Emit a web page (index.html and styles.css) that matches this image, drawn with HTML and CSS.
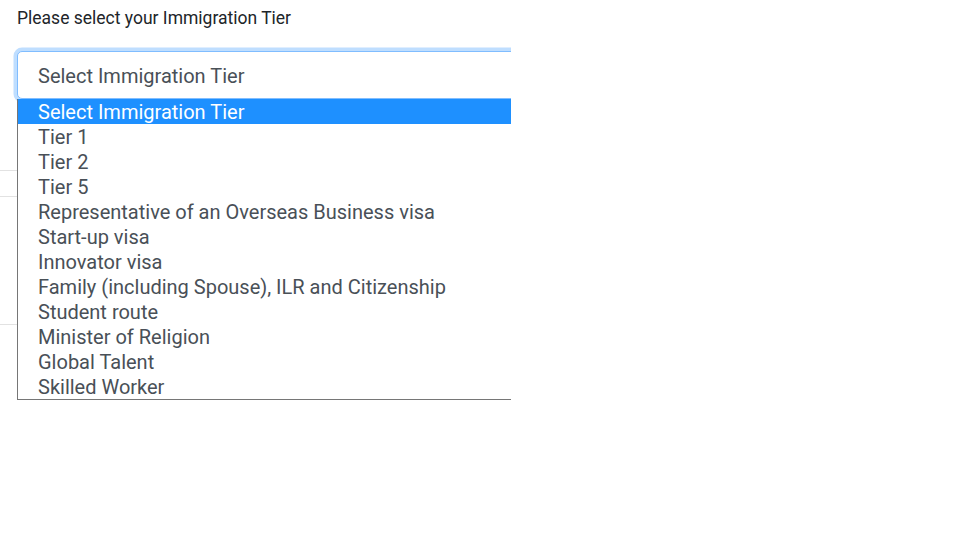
FILE: index.html
```html
<!DOCTYPE html>
<html>
<head>
<meta charset="utf-8">
<link rel="stylesheet" href="styles.css">
</head>
<body>
<div class="clip">
  <div class="form-group">
    <label class="label">Please select your Immigration Tier</label>
    <div class="select-wrap">
      <div class="select">Select Immigration Tier</div>
      <div class="behind">
        <div class="row r1"></div>
        <div class="row r2"></div>
        <div class="row r3"></div>
      </div>
      <ul class="list">
        <li class="opt active">Select Immigration Tier</li>
        <li class="opt">Tier 1</li>
        <li class="opt">Tier 2</li>
        <li class="opt">Tier 5</li>
        <li class="opt">Representative of an Overseas Business visa</li>
        <li class="opt">Start-up visa</li>
        <li class="opt">Innovator visa</li>
        <li class="opt">Family (including Spouse), ILR and Citizenship</li>
        <li class="opt">Student route</li>
        <li class="opt">Minister of Religion</li>
        <li class="opt">Global Talent</li>
        <li class="opt">Skilled Worker</li>
      </ul>
    </div>
  </div>
</div>
</body>
</html>
```
FILE: styles.css
```css
* { box-sizing: border-box; }
html, body { margin: 0; padding: 0; background: #fff; }
body { font-family: Roboto, "Liberation Sans", sans-serif; color: #212529; }
.clip { width: 511px; height: 540px; overflow: hidden; }
.form-group { padding: 6px 0 0 17px; }
.label { display: block; font-size: 17.5px; line-height: 24px; margin-bottom: 21px; }
.select-wrap { position: relative; width: 560px; }
.select {
  height: 48px;
  border: 1px solid #80bdff;
  border-radius: 5px;
  box-shadow: 0 0 0 3.5px rgba(0, 123, 255, 0.25);
  padding: 1px 0 0 20px;
  font-size: 20px;
  line-height: 46px;
  color: #495057;
  background: #fff;
}
.behind { margin-left: -17px; }
.row { height: 1px; background: #e2e2e2; }
.r1 { margin-top: 71px; }
.r2 { margin-top: 25px; }
.r3 { margin-top: 127px; }
.list {
  position: absolute;
  left: 0;
  top: 48px;
  width: 560px;
  margin: 0;
  padding: 0;
  list-style: none;
  border: 1px solid #767676;
  border-top: 0;
  background: #fff;
}
.opt {
  height: 25px;
  line-height: 26px;
  padding-left: 20px;
  font-size: 20px;
  color: #495057;
  white-space: nowrap;
}
.opt.active { background: #1e90ff; color: #fff; }
```
